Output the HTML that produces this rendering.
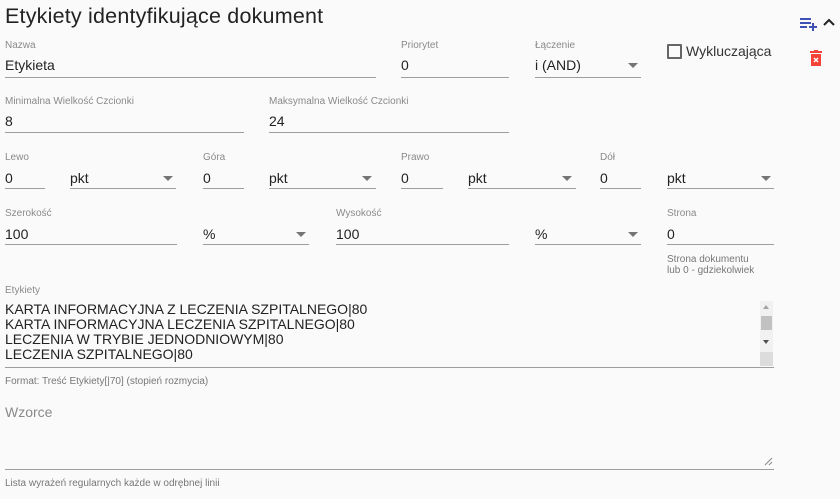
<!DOCTYPE html>
<html><head><meta charset="utf-8"><style>
body{margin:0;width:840px;height:499px;background:#fafafa;font-family:"Liberation Sans",sans-serif;position:relative;overflow:hidden;color:#212121}
.a{position:absolute;white-space:nowrap}
.lb{font-size:10px;color:#8a8a8a}
.v{font-size:14px;color:#222}
.ln{position:absolute;height:1px;background:#9e9e9e}
.ar{position:absolute;width:0;height:0;border-left:5px solid transparent;border-right:5px solid transparent;border-top:5px solid #757575}
.h{font-size:10px;color:#777;line-height:11px}
</style></head><body>
<div class="a" style="left:5px;top:4px;font-size:21.5px;color:#222;letter-spacing:0.2px">Etykiety identyfikujące dokument</div>
<svg class="a" style="left:799px;top:17px" width="20" height="14" viewBox="0 0 20 14"><path d="M1 2h11M1 6h11M1 10h7M14 6v8M10 10h8" stroke="#3f51b5" stroke-width="2" fill="none"/></svg>
<svg class="a" style="left:823px;top:18px" width="12" height="8" viewBox="0 0 12 8"><path d="M1 7l5-5 5 5" stroke="#222" stroke-width="2" fill="none"/></svg>
<svg class="a" style="left:810px;top:50px" width="12" height="16" viewBox="0 0 12 16"><rect x="0" y="1" width="12" height="2" fill="#f44336"/><rect x="4" y="0" width="4" height="2" fill="#f44336"/><rect x="1" y="4" width="10" height="12" fill="#f44336"/><path d="M4 8l4 4M8 8l-4 4" stroke="#fff" stroke-width="1.5"/></svg>

<div class="a lb" style="left:5px;top:40px">Nazwa</div><div class="a v" style="left:5px;top:57px">Etykieta</div><div class="ln" style="left:5px;width:371px;top:77px"></div>
<div class="a lb" style="left:401px;top:40px">Priorytet</div><div class="a v" style="left:401px;top:57px">0</div><div class="ln" style="left:401px;width:108px;top:77px"></div>
<div class="a lb" style="left:535px;top:40px">Łączenie</div><div class="a v" style="left:535px;top:57px">i (AND)</div><div class="ar" style="left:628px;top:63px"></div><div class="ln" style="left:535px;width:106px;top:77px"></div>
<div class="a" style="left:667px;top:44px;width:11px;height:11px;border:2px solid #666;border-radius:1px"></div>
<div class="a" style="left:686px;top:43px;font-size:14px;color:#333">Wykluczająca</div>

<div class="a lb" style="left:5px;top:96px">Minimalna Wielkość Czcionki</div><div class="a v" style="left:5px;top:113px">8</div><div class="ln" style="left:5px;width:239px;top:132px"></div>
<div class="a lb" style="left:269px;top:96px">Maksymalna Wielkość Czcionki</div><div class="a v" style="left:269px;top:113px">24</div><div class="ln" style="left:269px;width:240px;top:132px"></div>

<div class="a lb" style="left:5px;top:152px">Lewo</div><div class="a v" style="left:5px;top:170px">0</div><div class="ln" style="left:5px;width:40px;top:188px"></div>
<div class="a v" style="left:70px;top:170px">pkt</div><div class="ar" style="left:163px;top:176px"></div><div class="ln" style="left:70px;width:106px;top:188px"></div>
<div class="a lb" style="left:203px;top:152px">Góra</div><div class="a v" style="left:203px;top:170px">0</div><div class="ln" style="left:203px;width:41px;top:188px"></div>
<div class="a v" style="left:269px;top:170px">pkt</div><div class="ar" style="left:362px;top:176px"></div><div class="ln" style="left:269px;width:107px;top:188px"></div>
<div class="a lb" style="left:401px;top:152px">Prawo</div><div class="a v" style="left:401px;top:170px">0</div><div class="ln" style="left:401px;width:42px;top:188px"></div>
<div class="a v" style="left:468px;top:170px">pkt</div><div class="ar" style="left:562px;top:176px"></div><div class="ln" style="left:468px;width:108px;top:188px"></div>
<div class="a lb" style="left:600px;top:152px">Dół</div><div class="a v" style="left:600px;top:170px">0</div><div class="ln" style="left:600px;width:41px;top:188px"></div>
<div class="a v" style="left:667px;top:170px">pkt</div><div class="ar" style="left:761px;top:176px"></div><div class="ln" style="left:667px;width:107px;top:188px"></div>

<div class="a lb" style="left:5px;top:208px">Szerokość</div><div class="a v" style="left:5px;top:226px">100</div><div class="ln" style="left:5px;width:172px;top:244px"></div>
<div class="a v" style="left:203px;top:226px">%</div><div class="ar" style="left:296px;top:232px"></div><div class="ln" style="left:203px;width:106px;top:244px"></div>
<div class="a lb" style="left:336px;top:208px">Wysokość</div><div class="a v" style="left:336px;top:226px">100</div><div class="ln" style="left:336px;width:173px;top:244px"></div>
<div class="a v" style="left:535px;top:226px">%</div><div class="ar" style="left:628px;top:232px"></div><div class="ln" style="left:535px;width:106px;top:244px"></div>
<div class="a lb" style="left:667px;top:208px">Strona</div><div class="a v" style="left:667px;top:226px">0</div><div class="ln" style="left:667px;width:107px;top:244px"></div>
<div class="a h" style="left:667px;top:254px">Strona dokumentu<br>lub 0 - gdziekolwiek</div>

<div class="a lb" style="left:5px;top:285px">Etykiety</div>
<div class="a" style="left:5px;top:302px;font-size:14px;line-height:15px;color:#222">KARTA INFORMACYJNA Z LECZENIA SZPITALNEGO|80<br>KARTA INFORMACYJNA LECZENIA SZPITALNEGO|80<br>LECZENIA W TRYBIE JEDNODNIOWYM|80<br>LECZENIA SZPITALNEGO|80</div>
<div class="a" style="left:760px;top:301px;width:13px;height:65px;background:#f1f1f1"></div>
<div class="a" style="left:763px;top:305px;border-left:3px solid transparent;border-right:3px solid transparent;border-bottom:4px solid #a3a3a3"></div>
<div class="a" style="left:761px;top:316px;width:11px;height:14px;background:#c1c1c1"></div>
<div class="a" style="left:763px;top:340px;border-left:3px solid transparent;border-right:3px solid transparent;border-top:4px solid #505050"></div>
<div class="a" style="left:760px;top:352px;width:13px;height:14px;background:#dcdcdc"></div>
<div class="ln" style="left:5px;width:769px;top:367px"></div>
<div class="a h" style="left:5px;top:376px">Format: Treść Etykiety[|70] (stopień rozmycia)</div>

<div class="a" style="left:5px;top:404px;font-size:14px;color:#8a8a8a">Wzorce</div>
<svg class="a" style="left:764px;top:457px" width="9" height="9"><path d="M8 1L1 8M8 5L5 8" stroke="#888" stroke-width="1"/></svg>
<div class="ln" style="left:5px;width:769px;top:469px"></div>
<div class="a h" style="left:5px;top:478px">Lista wyrażeń regularnych każde w odrębnej linii</div>
</body></html>
